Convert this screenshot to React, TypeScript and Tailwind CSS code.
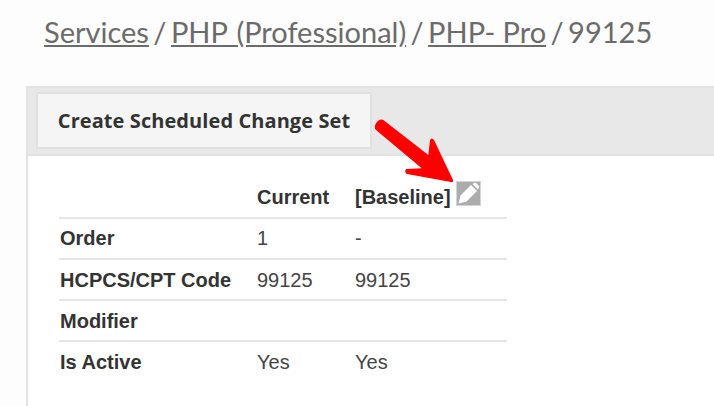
const rows = [
  { label: 'Order', current: '1', baseline: '-' },
  { label: 'HCPCS/CPT Code', current: '99125', baseline: '99125' },
  { label: 'Modifier', current: '', baseline: '' },
  { label: 'Is Active', current: 'Yes', baseline: 'Yes' },
]

export default function App() {
  return (
    <div className="relative h-[406px] w-[714px] overflow-hidden bg-[#fdfdfd] text-[#333]">
      {/* breadcrumb */}
      <div className="h-[86px] pl-11 pt-[12px] font-['Lato',sans-serif] text-[29px] leading-[40px] text-[#6b6b6b] [word-spacing:-3px]">
        <a className="underline [word-spacing:0px]">Services</a> / <a className="underline [word-spacing:2px]">PHP (Professional)</a> / <a className="underline [word-spacing:0px]">PHP- Pro</a> / 99125
      </div>

      <div className="ml-[26px] h-[320px] border-l-2 border-[#e2e2e2] bg-white">
        {/* toolbar */}
        <div className="h-[70px] border-y-2 border-[#e2e2e2] bg-[#e8e8e8] pl-2 pt-1">
          <button className="h-[57px] w-[336px] border-2 border-[#e0e0e0] bg-[#f5f5f5] font-['Open_Sans',sans-serif] text-[20px] font-bold tracking-[0.08px] text-[#333]">
            Create Scheduled Change Set
          </button>
        </div>

        {/* table */}
        <table className="ml-[31px] mt-[20px] w-[448px] border-collapse font-['Liberation_Sans',sans-serif] text-[20px] leading-[24px]">
          <thead>
            <tr className="h-[42px] border-b-2 border-[#e6e6e6] font-bold">
              <th className="w-[198px]"></th>
              <th className="w-[97px] text-left font-bold">Current</th>
              <th className="pl-px text-left font-bold">
                <span className="inline-flex items-center gap-[5px]">
                  [Baseline]
                  <svg width="25" height="25" viewBox="0 0 25 25" className="-mt-[7px]">
                    <rect x="0.5" y="0.5" width="24" height="24" fill="#acacac" stroke="#d4d4d4" />
                    <path d="M2.5 22.5 L4.5 14.5 L15 4 L21 10 L10.5 20.5 Z" fill="#fff" />
                    <path d="M16.5 3 L18.5 1.8 Q19.3 1.4 20 2 L23 5 Q23.6 5.7 23 6.5 L22 8.5 Z" fill="#fff" />
                  </svg>
                </span>
              </th>
            </tr>
          </thead>
          <tbody>
            {rows.map((r, i) => (
              <tr key={r.label} className={i < rows.length - 1 ? 'h-[41px] border-b-2 border-[#e6e6e6]' : 'h-[41px]'}>
                <td className={i === 0 ? 'pb-[2px] pl-px font-bold' : 'pl-px font-bold'}>{r.label}</td>
                <td className={i === 0 ? 'pb-[2px] text-[#444]' : 'text-[#444]'}>{r.current}</td>
                <td className={i === 0 ? 'pb-[2px] pl-px text-[#444]' : 'pl-px text-[#444]'}>{r.baseline}</td>
              </tr>
            ))}
          </tbody>
        </table>
      </div>

      {/* red annotation arrow */}
      <svg className="absolute left-[370px] top-[115px]" width="90" height="72" viewBox="0 0 90 72">
        <path
          d="M13.3 5 L58.3 40 L60 25 Q61.7 22 64 25 L83 65 Q83.5 68 81 67 L37 59 Q34 57 36 54 L51.7 53.3 L6 15 C2 11 9 2 13.3 5 Z"
          fill="#ff0000"
        />
      </svg>
    </div>
  )
}
